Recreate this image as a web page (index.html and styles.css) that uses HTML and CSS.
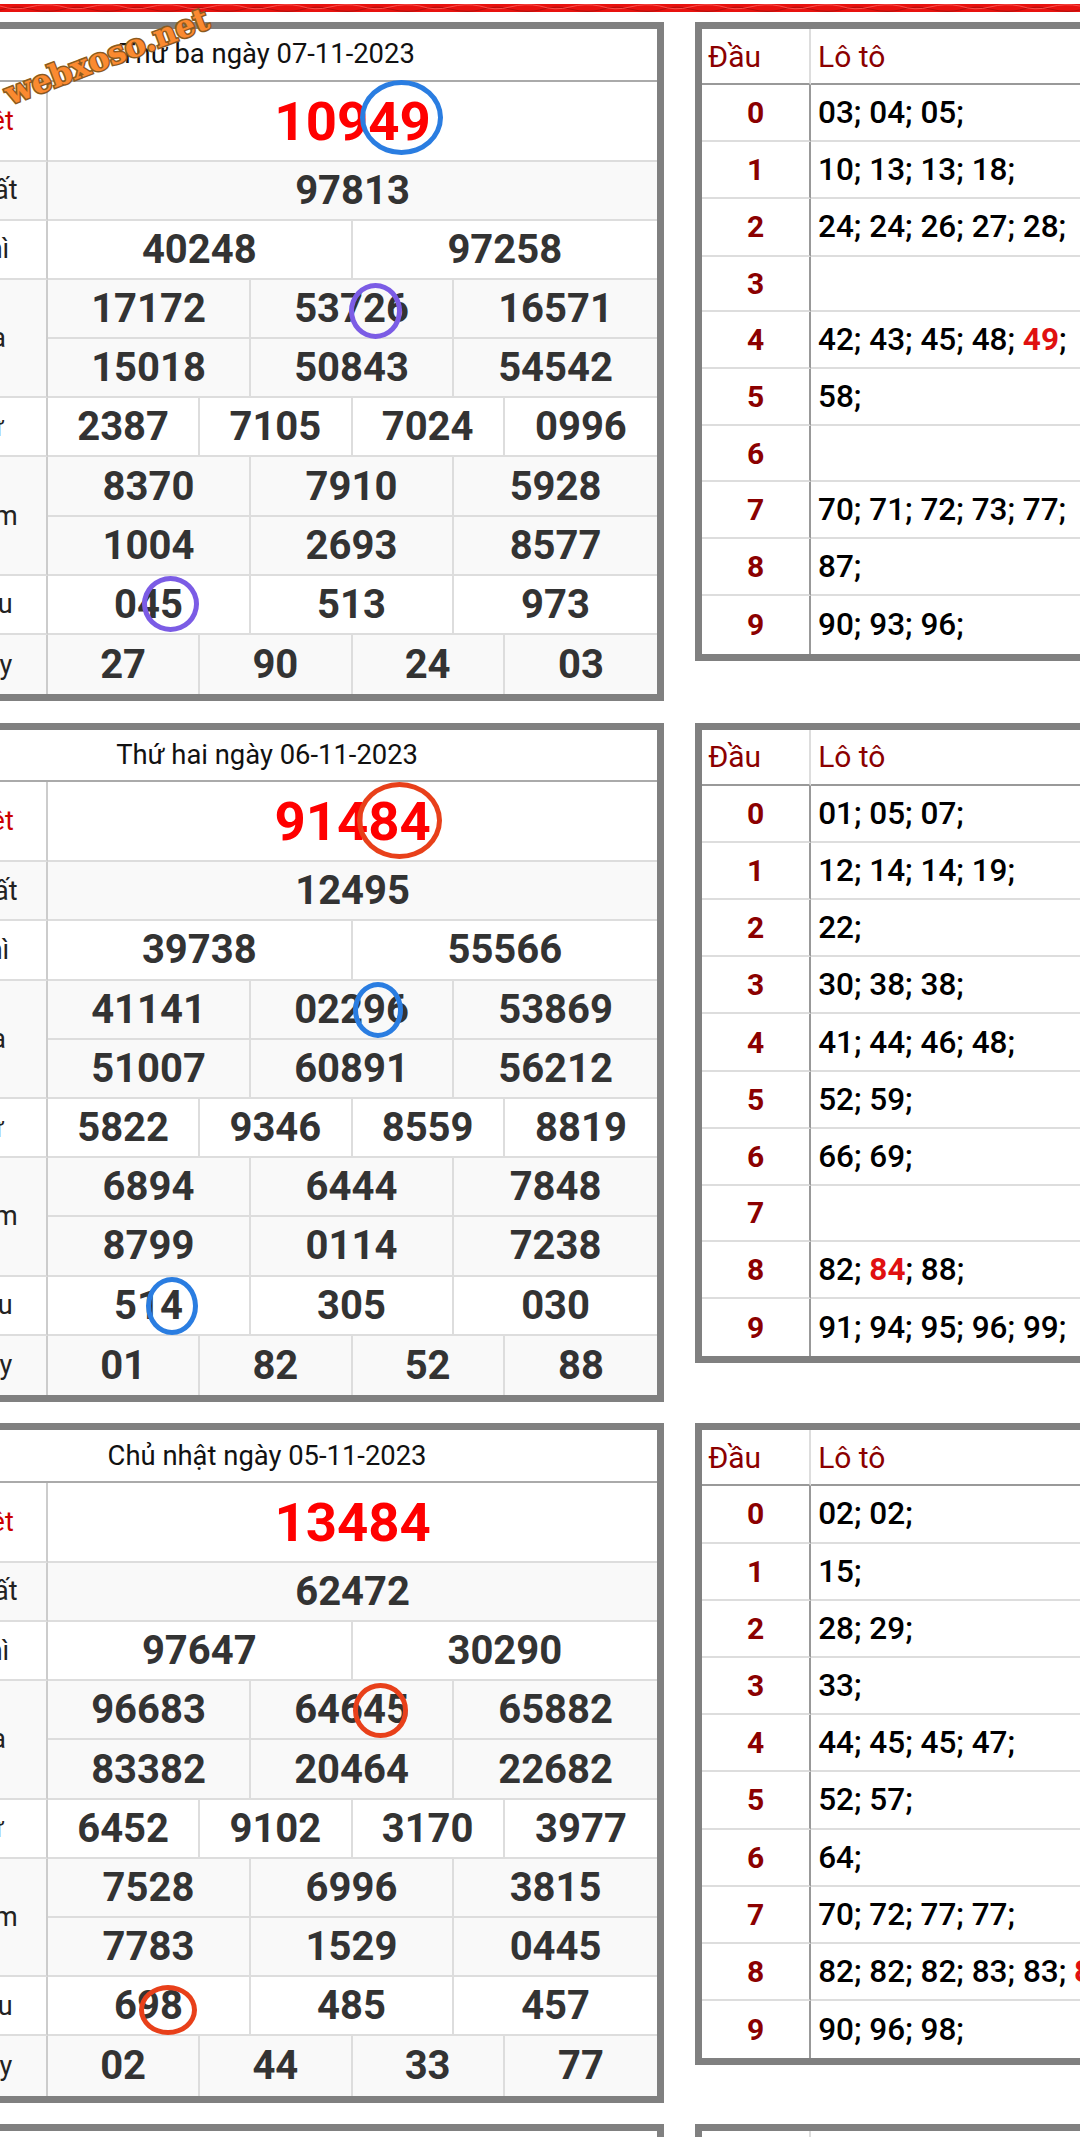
FILE: index.html
```html
<!DOCTYPE html>
<html lang="en">
<head>
  <meta charset="UTF-8">
  <meta name="viewport" content="width=device-width, initial-scale=1.0">
  <title>Kết quả xổ số</title>
  <link rel="stylesheet" href="styles.css">
</head>
<body>

<svg class="top-bar" width="1080" height="8" viewBox="0 0 1080 8" preserveAspectRatio="none">
  <defs>
    <pattern id="waves" width="60" height="8" patternUnits="userSpaceOnUse">
      <rect width="60" height="8" fill="#e8120f"/>
      <path d="M0 6 Q15 1 30 5 T60 6" fill="none" stroke="#b80d0b" stroke-width="1.2"/>
      <path d="M0 2 Q15 7 30 3 T60 2" fill="none" stroke="#f8504a" stroke-width="1"/>
    </pattern>
  </defs>
  <rect width="1080" height="8" fill="url(#waves)"/>
</svg>

<div class="logo">webxoso.net</div>

<div class="block">
  <table class="results">
    <colgroup><col class="col-label"><col span="12" class="col-unit"></colgroup>
    <tr class="date"><td colspan="13">Thứ ba ngày 07-11-2023</td></tr>
    <tr class="special"><td class="label">Đặc biệt</td><td colspan="12">10949</td></tr>
    <tr class="alt"><td class="label">Giải nhất</td><td colspan="12">97813</td></tr>
    <tr><td class="label">Giải nhì</td><td colspan="6">40248</td><td colspan="6">97258</td></tr>
    <tr class="alt"><td class="label" rowspan="2">Giải ba</td><td colspan="4">17172</td><td colspan="4">53726</td><td colspan="4">16571</td></tr>
    <tr class="alt"><td colspan="4">15018</td><td colspan="4">50843</td><td colspan="4">54542</td></tr>
    <tr><td class="label">Giải tư</td><td colspan="3">2387</td><td colspan="3">7105</td><td colspan="3">7024</td><td colspan="3">0996</td></tr>
    <tr class="alt"><td class="label" rowspan="2">Giải năm</td><td colspan="4">8370</td><td colspan="4">7910</td><td colspan="4">5928</td></tr>
    <tr class="alt"><td colspan="4">1004</td><td colspan="4">2693</td><td colspan="4">8577</td></tr>
    <tr><td class="label">Giải sáu</td><td colspan="4">045</td><td colspan="4">513</td><td colspan="4">973</td></tr>
    <tr class="alt"><td class="label">Giải bảy</td><td colspan="3">27</td><td colspan="3">90</td><td colspan="3">24</td><td colspan="3">03</td></tr>
  </table>
  <table class="loto">
    <colgroup><col class="col-head"><col></colgroup>
    <tr class="loto-head"><td>Đầu</td><td>Lô tô</td></tr>
    <tr><td>0</td><td>03; 04; 05;</td></tr>
    <tr><td>1</td><td>10; 13; 13; 18;</td></tr>
    <tr><td>2</td><td>24; 24; 26; 27; 28;</td></tr>
    <tr class="empty"><td>3</td><td></td></tr>
    <tr><td>4</td><td>42; 43; 45; 48; <span class="hit">49</span>;</td></tr>
    <tr><td>5</td><td>58;</td></tr>
    <tr class="empty"><td>6</td><td></td></tr>
    <tr><td>7</td><td>70; 71; 72; 73; 77;</td></tr>
    <tr><td>8</td><td>87;</td></tr>
    <tr><td>9</td><td>90; 93; 96;</td></tr>
  </table>
  <span class="ring blue ring-1a"></span>
  <span class="ring purple ring-1b"></span>
  <span class="ring purple ring-1c"></span>
</div>

<div class="block">
  <table class="results">
    <colgroup><col class="col-label"><col span="12" class="col-unit"></colgroup>
    <tr class="date"><td colspan="13">Thứ hai ngày 06-11-2023</td></tr>
    <tr class="special"><td class="label">Đặc biệt</td><td colspan="12">91484</td></tr>
    <tr class="alt"><td class="label">Giải nhất</td><td colspan="12">12495</td></tr>
    <tr><td class="label">Giải nhì</td><td colspan="6">39738</td><td colspan="6">55566</td></tr>
    <tr class="alt"><td class="label" rowspan="2">Giải ba</td><td colspan="4">41141</td><td colspan="4">02296</td><td colspan="4">53869</td></tr>
    <tr class="alt"><td colspan="4">51007</td><td colspan="4">60891</td><td colspan="4">56212</td></tr>
    <tr><td class="label">Giải tư</td><td colspan="3">5822</td><td colspan="3">9346</td><td colspan="3">8559</td><td colspan="3">8819</td></tr>
    <tr class="alt"><td class="label" rowspan="2">Giải năm</td><td colspan="4">6894</td><td colspan="4">6444</td><td colspan="4">7848</td></tr>
    <tr class="alt"><td colspan="4">8799</td><td colspan="4">0114</td><td colspan="4">7238</td></tr>
    <tr><td class="label">Giải sáu</td><td colspan="4">514</td><td colspan="4">305</td><td colspan="4">030</td></tr>
    <tr class="alt"><td class="label">Giải bảy</td><td colspan="3">01</td><td colspan="3">82</td><td colspan="3">52</td><td colspan="3">88</td></tr>
  </table>
  <table class="loto">
    <colgroup><col class="col-head"><col></colgroup>
    <tr class="loto-head"><td>Đầu</td><td>Lô tô</td></tr>
    <tr><td>0</td><td>01; 05; 07;</td></tr>
    <tr><td>1</td><td>12; 14; 14; 19;</td></tr>
    <tr><td>2</td><td>22;</td></tr>
    <tr><td>3</td><td>30; 38; 38;</td></tr>
    <tr><td>4</td><td>41; 44; 46; 48;</td></tr>
    <tr><td>5</td><td>52; 59;</td></tr>
    <tr><td>6</td><td>66; 69;</td></tr>
    <tr class="empty"><td>7</td><td></td></tr>
    <tr><td>8</td><td>82; <span class="hit">84</span>; 88;</td></tr>
    <tr><td>9</td><td>91; 94; 95; 96; 99;</td></tr>
  </table>
  <span class="ring red ring-2a"></span>
  <span class="ring blue ring-2b"></span>
  <span class="ring blue ring-2c"></span>
</div>

<div class="block">
  <table class="results">
    <colgroup><col class="col-label"><col span="12" class="col-unit"></colgroup>
    <tr class="date"><td colspan="13">Chủ nhật ngày 05-11-2023</td></tr>
    <tr class="special"><td class="label">Đặc biệt</td><td colspan="12">13484</td></tr>
    <tr class="alt"><td class="label">Giải nhất</td><td colspan="12">62472</td></tr>
    <tr><td class="label">Giải nhì</td><td colspan="6">97647</td><td colspan="6">30290</td></tr>
    <tr class="alt"><td class="label" rowspan="2">Giải ba</td><td colspan="4">96683</td><td colspan="4">64645</td><td colspan="4">65882</td></tr>
    <tr class="alt"><td colspan="4">83382</td><td colspan="4">20464</td><td colspan="4">22682</td></tr>
    <tr><td class="label">Giải tư</td><td colspan="3">6452</td><td colspan="3">9102</td><td colspan="3">3170</td><td colspan="3">3977</td></tr>
    <tr class="alt"><td class="label" rowspan="2">Giải năm</td><td colspan="4">7528</td><td colspan="4">6996</td><td colspan="4">3815</td></tr>
    <tr class="alt"><td colspan="4">7783</td><td colspan="4">1529</td><td colspan="4">0445</td></tr>
    <tr><td class="label">Giải sáu</td><td colspan="4">698</td><td colspan="4">485</td><td colspan="4">457</td></tr>
    <tr class="alt"><td class="label">Giải bảy</td><td colspan="3">02</td><td colspan="3">44</td><td colspan="3">33</td><td colspan="3">77</td></tr>
  </table>
  <table class="loto">
    <colgroup><col class="col-head"><col></colgroup>
    <tr class="loto-head"><td>Đầu</td><td>Lô tô</td></tr>
    <tr><td>0</td><td>02; 02;</td></tr>
    <tr><td>1</td><td>15;</td></tr>
    <tr><td>2</td><td>28; 29;</td></tr>
    <tr><td>3</td><td>33;</td></tr>
    <tr><td>4</td><td>44; 45; 45; 47;</td></tr>
    <tr><td>5</td><td>52; 57;</td></tr>
    <tr><td>6</td><td>64;</td></tr>
    <tr><td>7</td><td>70; 72; 77; 77;</td></tr>
    <tr><td>8</td><td>82; 82; 82; 83; 83; <span class="hit">84</span>;</td></tr>
    <tr><td>9</td><td>90; 96; 98;</td></tr>
  </table>
  <span class="ring red ring-3a"></span>
  <span class="ring red ring-3b"></span>
</div>

<div class="block">
  <table class="results">
    <colgroup><col class="col-label"><col span="12" class="col-unit"></colgroup>
    <tr class="date"><td colspan="13"></td></tr>
  </table>
  <table class="loto">
    <colgroup><col class="col-head"><col></colgroup>
    <tr class="loto-head"><td></td><td></td></tr>
  </table>
</div>

</body>
</html>
```

FILE: styles.css
```css
html, body {
  margin: 0;
  height: 2137px;
  overflow: hidden;
  background: #fff;
}

body {
  position: relative;
  font-family: Roboto, "Liberation Sans", sans-serif;
  color: #000;
}

.top-bar {
  display: block;
  margin: 4px 0 10px;
  height: 8px;
  width: 1080px;
}

.logo {
  position: absolute;
  left: -1px;
  top: 34px;
  font-family: "DejaVu Serif", serif;
  font-weight: bold;
  font-size: 31.5px;
  line-height: 44px;
  white-space: nowrap;
  transform: rotate(-21deg);
  color: #fb8a30;
  -webkit-text-stroke: 3px #8a5a20;
  paint-order: stroke fill;
  z-index: 5;
}

.block {
  position: relative;
  display: flex;
  align-items: flex-start;
  gap: 31px;
  margin-left: -124px;
  margin-bottom: 21.7px;
  height: 679px;
}

table {
  flex: none;
  border: 7px solid #808080;
  border-spacing: 0;
  table-layout: fixed;
}

td {
  box-sizing: border-box;
  padding: 0;
  border-right: 2px solid #ddd;
  border-bottom: 2px solid #ddd;
  text-align: center;
  white-space: nowrap;
}

tr:last-child td {
  border-bottom: none;
}

td:last-child {
  border-right: none;
}

/* results table */
.results {
  width: 788px;
}

.col-label {
  width: 165px;
}

.col-unit {
  width: 50.75px;
}

.results td {
  height: 59.2px;
  font-size: 40px;
  font-weight: 700;
  color: #333;
}

.results .date td {
  height: 52.5px;
  padding-right: 6px;
  font-size: 27.4px;
  font-weight: 400;
  color: #111;
  border-bottom-color: #aaa;
}

.results .special td {
  height: 80px;
  font-size: 54.5px;
  color: #f00;
}

.results .label {
  font-size: 27px;
  font-weight: 400;
  color: #222;
  border-right-color: #ccc;
}

.results .special .label {
  font-size: 27px;
  font-weight: 400;
  color: #c00;
}

.alt td {
  background: #f9f9f9;
}

/* loto table */
.loto {
  width: 500px;
}

.col-head {
  width: 109px;
}

.loto td {
  height: 57.2px;
  font-size: 31.5px;
  font-weight: 500;
  border-right-color: #999;
}

.loto td:first-child {
  font-size: 30px;
  font-weight: 700;
  color: #8b0000;
}

.loto td:last-child {
  text-align: left;
  padding-left: 7px;
}

.loto .empty td {
  height: 55.5px;
}

.loto .loto-head td {
  height: 56px;
  font-size: 30px;
  font-weight: 400;
  color: #8b0000;
  border-bottom-color: #999;
}

.loto .loto-head td:first-child {
  text-align: left;
  padding-left: 6px;
  border-right-color: #ddd;
}

.hit {
  font-weight: 700;
  color: #e01010;
}

/* hand drawn circles over the numbers */
.ring {
  position: absolute;
  box-sizing: border-box;
  border: 5px solid;
  border-radius: 50%;
}

.blue { border-color: #2a7de1; }
.purple { border-color: #7b5ce5; }
.red { border-color: #e8401a; }

.ring-1a { left: 484px; top: 58px; width: 83px; height: 75px; }
.ring-1b { left: 473px; top: 261px; width: 53px; height: 56px; }
.ring-1c { left: 266px; top: 554px; width: 57px; height: 56px; }
.ring-2a { left: 481px; top: 59px; width: 85px; height: 77px; }
.ring-2b { left: 477px; top: 259px; width: 50px; height: 56px; }
.ring-2c { left: 270px; top: 554px; width: 52px; height: 58px; }
.ring-3a { left: 477px; top: 260px; width: 55px; height: 55px; }
.ring-3b { left: 263px; top: 562px; width: 58px; height: 50px; }
```
